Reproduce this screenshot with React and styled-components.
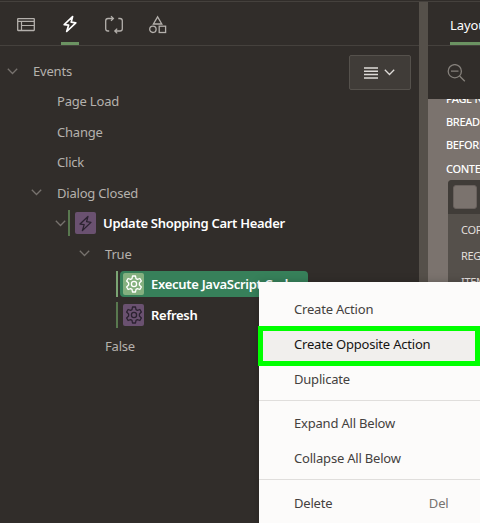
import React from "react";
import styled, { createGlobalStyle } from "styled-components";

const Global = createGlobalStyle`
  * { box-sizing: border-box; }
  html, body { margin: 0; padding: 0; overflow: hidden; background: #312d2a; }
  body { font-family: "Noto Sans", "Open Sans", sans-serif; font-size: 13px; }
`;

const Page = styled.div`
  position: relative;
  width: 480px;
  height: 523px;
  padding-top: 1px;
  overflow: hidden;
  background: #312d2a;
`;

const Columns = styled.div`
  display: grid;
  grid-template-columns: 419px 9px 52px;
  height: 522px;
  border-top: 1px solid #45413d;
`;

const Pane = styled.section`
  display: flex;
  flex-direction: column;
  min-width: 0;
  overflow: hidden;
`;

const Splitter = styled.div`
  background: #55504a;
`;

const TabBar = styled.nav`
  display: flex;
  flex: none;
  height: 44px;
  padding-left: ${(p) => p.$inset}px;
  gap: 26px;
  border-bottom: 1px solid #45413d;
`;

const Tab = styled.div`
  display: flex;
  flex: none;
  justify-content: center;
  width: ${(p) => p.$width || 18}px;
  height: 43px;
  padding-top: 13px;
  color: ${(p) => (p.$active ? "#ffffff" : "#b4b0ac")};
  border-bottom: 3px solid ${(p) => (p.$active ? "#6b9362" : "transparent")};
  svg { flex: none; }
`;

const LayoutTab = styled(Tab)`
  justify-content: flex-start;
  padding-top: 14px;
  line-height: 18px;
  letter-spacing: -0.1px;
`;

const TreeArea = styled.div`
  display: flex;
  justify-content: space-between;
  padding: 10px 8px 0 0;
`;

const Tree = styled.div`
  display: flex;
  flex-direction: column;
`;

const Row = styled.div`
  display: flex;
  align-items: center;
  height: ${(p) => p.$height || 30}px;
  padding-left: ${(p) => p.$indent}px;
  color: ${(p) => (p.$strong ? "#ffffff" : "#b5b1ad")};
  font-weight: ${(p) => (p.$strong ? 600 : 400)};
  letter-spacing: ${(p) => (p.$strong ? -0.29 : -0.2)}px;
  white-space: nowrap;
`;

const Label = styled.span`
  line-height: 18px;
`;

const Toggle = styled.span`
  display: flex;
  width: ${(p) => p.$width}px;
  color: #77726e;
`;

const Marker = styled.span`
  width: 2px;
  height: 26px;
  margin-right: 2px;
  background: ${(p) => (p.$bright ? "#7ba473" : "#59784f")};
`;

const Entry = styled.span`
  display: flex;
  align-items: center;
  height: 26px;
  width: ${(p) => p.$width || "auto"};
  padding-left: 3px;
  gap: 7px;
  border-radius: 4px;
  background: ${(p) => (p.$selected ? "#37805a" : "transparent")};
`;

const Tile = styled.span`
  display: flex;
  align-items: center;
  justify-content: center;
  width: 21px;
  height: 22px;
  border-radius: 2px;
  color: ${(p) => (p.$selected ? "#ffffff" : "#2b2230")};
  background: ${(p) => (p.$selected ? "#84b07f" : "#6a5170")};
`;

const MenuButton = styled.div`
  display: flex;
  align-items: center;
  justify-content: center;
  gap: 6px;
  width: 62px;
  height: 35px;
  margin-top: -1px;
  padding-right: 2px;
  color: #dedbd8;
  background: #403c38;
  border: 1px solid #55514c;
  border-radius: 2px;
`;

const SearchBar = styled.div`
  flex: none;
  height: 53px;
  padding: 18px 0 0 19px;
  color: #85807b;
`;

const Canvas = styled.div`
  flex: 1;
  padding-left: 18px;
  overflow: hidden;
  background: #7b736e;
`;

const Position = styled.div`
  height: 23.4px;
  line-height: 23px;
  font-size: 11px;
  font-weight: 500;
  letter-spacing: -0.35px;
  white-space: nowrap;
  color: #fff;
  &:first-child { margin-top: -12.5px; }
`;

const Region = styled.div`
  width: 80px;
  height: 350px;
  margin: -0.5px 0 0 2px;
  border-top-left-radius: 4px;
  background: #55504b;
  overflow: hidden;
`;

const RegionHead = styled.div`
  height: 34px;
  padding: 5px;
  background: #403c38;
`;

const RegionIcon = styled.div`
  width: 24px;
  height: 24px;
  border: 1px solid #69615d;
  border-radius: 3px;
  background: #7b736e;
`;

const Slot = styled.div`
  height: 26px;
  padding-left: 13px;
  line-height: 32px;
  font-size: 11px;
  letter-spacing: -0.3px;
  white-space: nowrap;
  color: #e2dfdc;
`;

const Menu = styled.div`
  position: absolute;
  left: 259px;
  top: 282px;
  width: 240px;
  height: 260px;
  padding-top: 10px;
  background: #fcfbfa;
  box-shadow: 0 0 8px rgba(0, 0, 0, 0.22);
`;

const Item = styled.div`
  display: flex;
  height: 35px;
  padding-left: 35px;
  line-height: 35px;
  color: ${(p) => (p.$active ? "#161513" : "#44413e")};
  letter-spacing: -0.2px;
  white-space: nowrap;
  background: ${(p) => (p.$active ? "#f1efed" : "transparent")};
`;

const Shortcut = styled.span`
  margin-left: 96.5px;
  color: #777370;
`;

const Divider = styled.div`
  height: 1px;
  margin: 3px 0 ${(p) => p.$after || 5}px;
  background: #e0dedc;
`;

const Highlight = styled.div`
  position: absolute;
  left: 258px;
  top: 326px;
  width: 222px;
  height: 40px;
  border: 5px solid #00ff00;
`;

const Chevron = ({ width = 11 }) => (
  <svg width={width} height="7" viewBox="0 0 11 7" fill="none" stroke="currentColor" strokeWidth="1.3">
    <path d="M.8.8 5.5 5.5 10.2.8" />
  </svg>
);

const Bolt = ({ size = 18, weight = 1.4 }) => (
  <svg width={size} height={size} viewBox="0 0 18 18" fill="none" stroke="currentColor" strokeWidth={weight} strokeLinejoin="round">
    <path d="M11.6 1.5 3.2 9.6 7.6 10.2 5.7 16.5 14.8 7.8 10.2 7.1Z" />
  </svg>
);

const Gear = () => (
  <svg width="18" height="18" viewBox="0 0 18 18" fill="none" stroke="currentColor" strokeWidth="1.3" strokeLinejoin="round">
    <path d="M7.5 1h3l.5 2.6 1.4.8 2.5-.9 1.5 2.6-2 1.8v2.2l2 1.8-1.5 2.6-2.5-.9-1.4.8-.5 2.6h-3L7 14.4l-1.4-.8-2.5.9-1.5-2.6 2-1.8V7.9l-2-1.8 1.5-2.6 2.5.9L7 3.6Z" />
    <circle cx="9" cy="9" r="2.6" />
  </svg>
);

const WindowIcon = () => (
  <svg width="18" height="18" viewBox="0 0 18 18" fill="none" stroke="currentColor">
    <rect x=".7" y="3.6" width="16.6" height="11.9" rx=".5" strokeWidth="1.3" />
    <path d="M1 6.3h16M4.5 6.5v9M4.5 10.5H17" strokeWidth="1.2" />
  </svg>
);

const LoopIcon = () => (
  <svg width="20" height="20" viewBox="0 0 20 20" fill="none" stroke="currentColor" strokeWidth="1.3">
    <path d="M5.2 16H4Q1.7 16 1.7 13.7V5.8Q1.7 3.5 4 3.5H9.2M7 1.1 9.4 3.5 7 5.9M14.3 3.5h1.7q2.3 0 2.3 2.3v7.9q0 2.3-2.3 2.3H10.8M13.2 13.6 10.8 16l2.4 2.4" />
  </svg>
);

const ShapesIcon = () => (
  <svg width="18" height="19" viewBox="0 0 18 19" fill="none" stroke="currentColor" strokeWidth="1.3">
    <path d="M8.6 1.8 12.8 9H4.4Z" />
    <circle cx="3.9" cy="14.3" r="3.2" />
    <rect x="10.2" y="11.2" width="6.4" height="6.3" />
  </svg>
);

const ListIcon = () => (
  <svg width="14" height="12" viewBox="0 0 14 12" stroke="currentColor" strokeWidth="1.5">
    <path d="M0 1h14M0 4.3h14M0 7.6h14M0 10.9h14" />
  </svg>
);

const ZoomOutIcon = () => (
  <svg width="20" height="20" viewBox="0 0 20 20" fill="none" stroke="currentColor" strokeWidth="1.3">
    <circle cx="7.8" cy="7.2" r="6.6" />
    <path d="M4 7.2h7.5M12.6 12l5.2 5.2" />
  </svg>
);

export default function App() {
  return (
    <>
      <Global />
      <Page>
        <Columns>
          <Pane>
            <TabBar $inset={17}>
              <Tab><WindowIcon /></Tab>
              <Tab $active><Bolt weight={1.7} /></Tab>
              <Tab><LoopIcon /></Tab>
              <Tab><ShapesIcon /></Tab>
            </TabBar>
            <TreeArea>
              <Tree>
                <Row $indent={7}><Toggle $width={26}><Chevron /></Toggle><Label>Events</Label></Row>
                <Row $indent={57}><Label>Page Load</Label></Row>
                <Row $indent={57} $height={31}><Label>Change</Label></Row>
                <Row $indent={57}><Label>Click</Label></Row>
                <Row $indent={31} $height={31}><Toggle $width={26}><Chevron /></Toggle><Label>Dialog Closed</Label></Row>
                <Row $indent={55} $strong>
                  <Toggle $width={13}><Chevron /></Toggle>
                  <Marker /><Entry><Tile><Bolt size={17} /></Tile><Label>Update Shopping Cart Header</Label></Entry>
                </Row>
                <Row $indent={79} $height={31}><Toggle $width={26}><Chevron /></Toggle><Label>True</Label></Row>
                <Row $indent={116} $strong>
                  <Marker $bright /><Entry $selected $width="188px"><Tile $selected><Gear /></Tile><Label>Execute JavaScript Code</Label></Entry>
                </Row>
                <Row $indent={116} $height={32} $strong>
                  <Marker /><Entry><Tile><Gear /></Tile><Label>Refresh</Label></Entry>
                </Row>
                <Row $indent={105} $height={29}><Label>False</Label></Row>
              </Tree>
              <MenuButton><ListIcon /><Chevron /></MenuButton>
            </TreeArea>
          </Pane>
          <Splitter />
          <Pane>
            <TabBar $inset={22}><LayoutTab $active $width={60}>Layout</LayoutTab></TabBar>
            <SearchBar><ZoomOutIcon /></SearchBar>
            <Canvas>
              <Position>PAGE NAVIGATION</Position>
              <Position>BREADCRUMB BAR</Position>
              <Position>BEFORE CONTENT BODY</Position>
              <Position>CONTENT BODY</Position>
              <Region>
                <RegionHead><RegionIcon /></RegionHead>
                <Slot>COPY</Slot>
                <Slot>REGION BODY</Slot>
                <Slot>ITEMS</Slot>
              </Region>
            </Canvas>
          </Pane>
        </Columns>
        <Menu>
          <Item>Create Action</Item>
          <Item $active>Create Opposite Action</Item>
          <Item>Duplicate</Item>
          <Divider />
          <Item>Expand All Below</Item>
          <Item>Collapse All Below</Item>
          <Divider $after={6} />
          <Item>Delete<Shortcut>Del</Shortcut></Item>
        </Menu>
        <Highlight />
      </Page>
    </>
  );
}
